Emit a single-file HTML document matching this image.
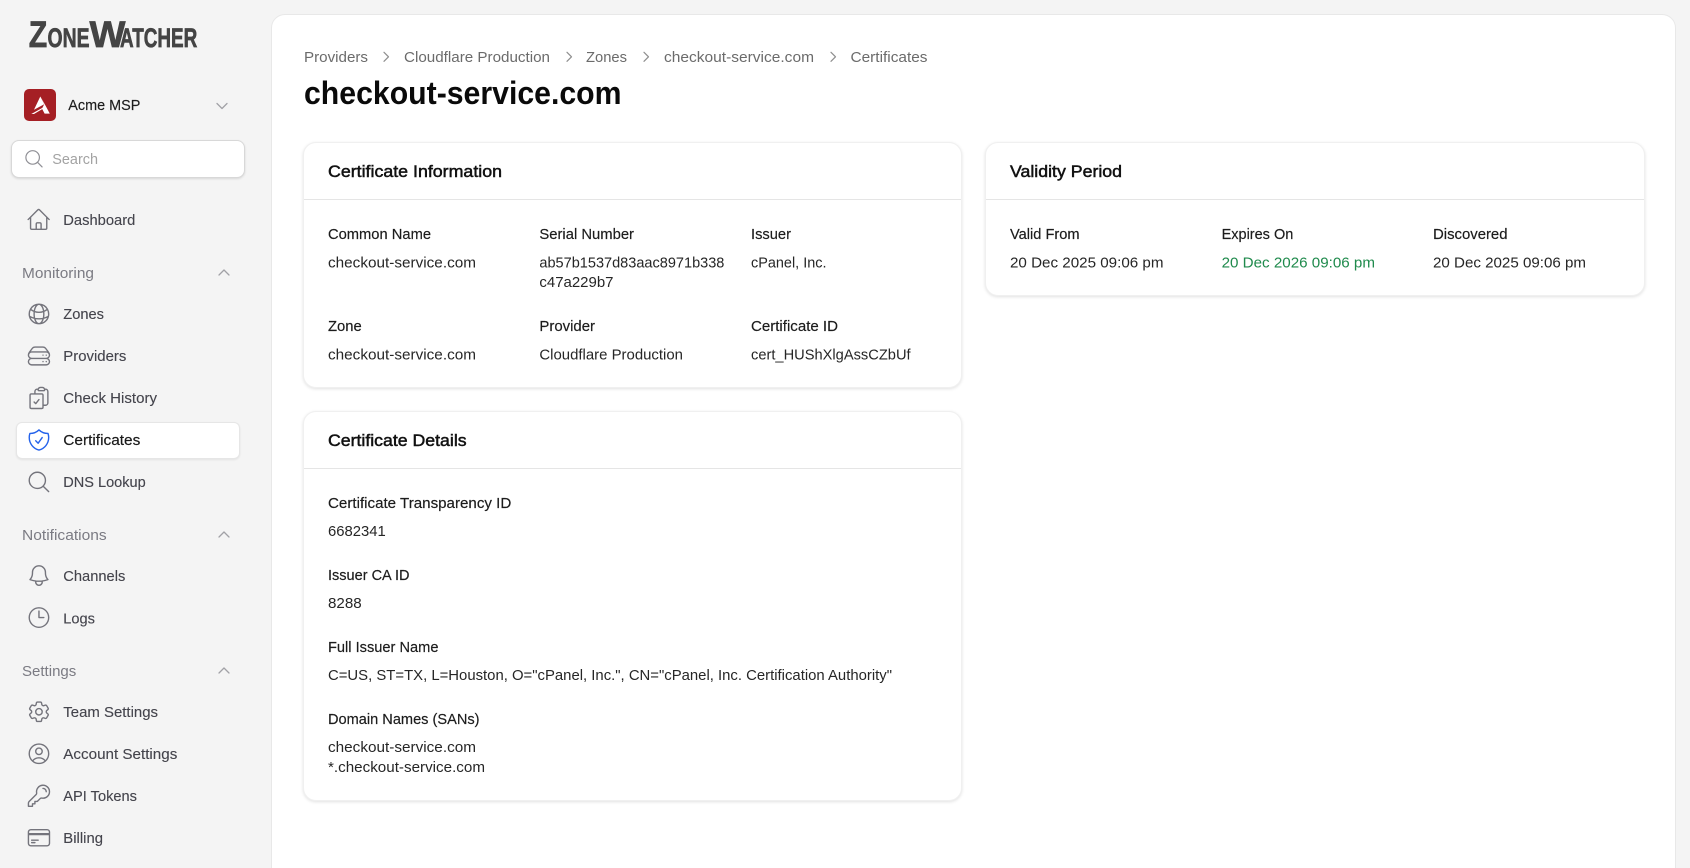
<!DOCTYPE html>
<html lang="en">
<head>
<meta charset="utf-8">
<title>checkout-service.com - Certificates</title>
<style>
html,body{margin:0;padding:0;width:1690px;height:868px;overflow:hidden;background:#f4f4f4;font-family:"Liberation Sans",sans-serif}
#app{position:relative;width:1690px;height:868px;overflow:hidden}
.box{position:absolute;box-sizing:border-box;background:#fff}
.panel{left:271px;top:14px;width:1405px;height:880px;border:1px solid #e8e8e8;border-radius:14px}
.search{left:11px;top:140px;width:234px;height:37.5px;border:1px solid #d8d8d8;border-radius:8px;box-shadow:0 1px 2px rgba(0,0,0,.12)}
.active{left:16px;top:421.5px;width:224px;height:37.5px;border:1px solid #e6e6e6;border-radius:6px;box-shadow:0 1px 2px rgba(0,0,0,.07)}
.card{border:1px solid #f0f0f0;border-radius:13px;box-shadow:0 1px 3px rgba(0,0,0,.12)}
.card i{position:absolute;left:0;right:0;height:1px;background:#e5e5e5;top:56px}
svg.o{position:absolute;left:0;top:0}
text{font-family:"Liberation Sans",sans-serif;font-size:15px}
.n{fill:#44444c;stroke:#44444c;stroke-width:.12}
.s{fill:#7b7b83}
.l{fill:#1c1c1c;stroke:#1c1c1c;stroke-width:.18}
.v{fill:#262626}
.b{fill:#6b6b6b}
.t{font-size:17px;fill:#111;stroke:#111;stroke-width:.5}
.ic{fill:none;stroke:#74747c;stroke-width:1.3;stroke-linecap:round;stroke-linejoin:round}
.lg{font-weight:700;fill:#444;stroke:#444;stroke-width:.7}
</style>
</head>
<body>
<div id="app">
<div class="box panel"></div>
<div class="box search"></div>
<div class="box active"></div>
<div class="box card" style="left:303px;top:142px;width:659px;height:246px"><i></i></div>
<div class="box card" style="left:303px;top:411px;width:659px;height:390px"><i></i></div>
<div class="box card" style="left:985px;top:142px;width:659.5px;height:154px"><i></i></div>

<svg class="o" width="1690" height="868" viewBox="0 0 1690 868" xmlns="http://www.w3.org/2000/svg">
<!-- logo -->
<text class="lg" x="28.8" y="46.8" style="font-size:37px" textLength="18.5" lengthAdjust="spacingAndGlyphs">Z</text>
<text class="lg" x="47.5" y="46.8" style="font-size:27px" textLength="42" lengthAdjust="spacingAndGlyphs">ONE</text>
<text class="lg" x="89.5" y="46.8" style="font-size:37px" textLength="36" lengthAdjust="spacingAndGlyphs">W</text>
<text class="lg" x="120" y="46.8" style="font-size:27px" textLength="77.3" lengthAdjust="spacingAndGlyphs">ATCHER</text>

<!-- org -->
<rect x="24" y="89" width="32" height="32" rx="5" fill="#a51f24"/>
<path d="M40.3 96.5 L34 109.8 L44.2 104.3 Z" fill="#fff"/>
<path d="M40.3 96.5 L45.6 105.8 L49.8 113.6 L44.6 113.6 L42 108.6 L44.2 104.3 Z" fill="#fff"/>
<path d="M31.3 114 L45 106.4 L45.4 107.2 L34 114 Z" fill="#fff"/>
<text x="68.3" y="110" textLength="72" lengthAdjust="spacingAndGlyphs" fill="#1c1c1c" stroke="#1c1c1c" stroke-width=".15">Acme MSP</text>
<path d="M217 103.5 L222 108.5 L227 103.5" fill="none" stroke="#a1a1a6" stroke-width="1.3" stroke-linecap="round" stroke-linejoin="round"/>

<!-- search -->
<g transform="translate(23.2 148) scale(.9)"><path class="ic" d="m21 21-5.197-5.197m0 0A7.5 7.5 0 1 0 5.196 5.196a7.5 7.5 0 0 0 10.607 10.607Z" style="stroke:#8f8f95"/></g>
<text x="52.3" y="164" textLength="45.7" lengthAdjust="spacingAndGlyphs" fill="#a3a3a3">Search</text>

<!-- nav -->
<g transform="translate(25.7 206.6) scale(1.08)"><path class="ic" d="m2.25 12 8.954-8.955c.44-.439 1.152-.439 1.591 0L21.75 12M4.5 9.75v10.125c0 .621.504 1.125 1.125 1.125H9.75v-4.875c0-.621.504-1.125 1.125-1.125h2.25c.621 0 1.125.504 1.125 1.125V21h4.125c.621 0 1.125-.504 1.125-1.125V9.75M8.25 21h8.25"/></g>
<text class="n" x="63.3" y="225.2" textLength="72" lengthAdjust="spacingAndGlyphs">Dashboard</text>

<text class="s" x="22" y="278" textLength="72" lengthAdjust="spacingAndGlyphs">Monitoring</text>
<path d="M219 275 L224 270 L229 275" fill="none" stroke="#a1a1a6" stroke-width="1.3" stroke-linecap="round" stroke-linejoin="round"/>

<g transform="translate(26 301) scale(1.08)"><path class="ic" d="M12 21a9.004 9.004 0 0 0 8.716-6.747M12 21a9.004 9.004 0 0 1-8.716-6.747M12 21c2.485 0 4.5-4.03 4.5-9S14.485 3 12 3m0 18c-2.485 0-4.5-4.03-4.5-9S9.515 3 12 3m0 0a8.997 8.997 0 0 1 7.843 4.582M12 3a8.997 8.997 0 0 0-7.843 4.582m15.686 0A11.953 11.953 0 0 1 12 10.5c-2.998 0-5.74-1.1-7.843-2.918m15.686 0A8.959 8.959 0 0 1 21 12c0 .778-.099 1.533-.284 2.253m0 0A17.919 17.919 0 0 1 12 16.5c-3.162 0-6.133-.815-8.716-2.247m0 0A9.015 9.015 0 0 1 3 12c0-1.605.42-3.113 1.157-4.418"/></g>
<text class="n" x="63.3" y="319" textLength="40.7" lengthAdjust="spacingAndGlyphs">Zones</text>

<g transform="translate(26 343) scale(1.08)"><path class="ic" d="M5.25 14.25h13.5m-13.5 0a3 3 0 0 1-3-3m3 3a3 3 0 1 0 0 6h13.5a3 3 0 1 0 0-6m-16.5-3a3 3 0 0 1 3-3h13.5a3 3 0 0 1 3 3m-19.5 0a4.5 4.5 0 0 1 .9-2.7L5.737 5.1a3.375 3.375 0 0 1 2.7-1.35h7.126c1.062 0 2.062.5 2.7 1.35l2.587 3.45a4.5 4.5 0 0 1 .9 2.7m0 0a3 3 0 0 1-3 3m0 3h.008v.008h-.008v-.008Zm0-6h.008v.008h-.008v-.008Zm-3 6h.008v.008h-.008v-.008Zm0-6h.008v.008h-.008v-.008Z"/></g>
<text class="n" x="63.3" y="361" textLength="63" lengthAdjust="spacingAndGlyphs">Providers</text>

<g transform="translate(26 385) scale(1.08)"><path class="ic" d="M11.35 3.836c-.065.21-.1.433-.1.664 0 .414.336.75.75.75h4.5a.75.75 0 0 0 .75-.75 2.25 2.25 0 0 0-.1-.664m-5.8 0A2.251 2.251 0 0 1 13.5 2.25H15c1.012 0 1.867.668 2.15 1.586m-5.8 0c-.376.023-.75.05-1.124.08C9.095 4.01 8.25 4.973 8.25 6.108V8.25m8.9-4.414c.376.023.75.05 1.124.08 1.131.094 1.976 1.057 1.976 2.192V16.5A2.25 2.25 0 0 1 18 18.75h-2.25m-7.5-10.5H4.875c-.621 0-1.125.504-1.125 1.125v11.25c0 .621.504 1.125 1.125 1.125h9.75c.621 0 1.125-.504 1.125-1.125V18.75m-7.5-10.5h6.375c.621 0 1.125.504 1.125 1.125v9.375m-8.25-3 1.5 1.5 3-3.75"/></g>
<text class="n" x="63.3" y="403" textLength="93.7" lengthAdjust="spacingAndGlyphs">Check History</text>

<g transform="translate(26 427) scale(1.08)"><path class="ic" style="stroke:#2563eb" d="M9 12.75 11.25 15 15 9.75m-3-7.036A11.959 11.959 0 0 1 3.598 6 11.99 11.99 0 0 0 3 9.749c0 5.592 3.824 10.29 9 11.623 5.176-1.332 9-6.03 9-11.622 0-1.31-.21-2.571-.598-3.751h-.152c-3.196 0-6.1-1.248-8.25-3.286Z"/></g>
<text x="63.3" y="445" textLength="77" lengthAdjust="spacingAndGlyphs" fill="#1a1a1a" stroke="#1a1a1a" stroke-width=".18">Certificates</text>

<g transform="translate(26 469) scale(1.08)"><path class="ic" d="m21 21-5.197-5.197m0 0A7.5 7.5 0 1 0 5.196 5.196a7.5 7.5 0 0 0 10.607 10.607Z"/></g>
<text class="n" x="63.3" y="487" textLength="82.4" lengthAdjust="spacingAndGlyphs">DNS Lookup</text>

<text class="s" x="22" y="540" textLength="84.7" lengthAdjust="spacingAndGlyphs">Notifications</text>
<path d="M219 537 L224 532 L229 537" fill="none" stroke="#a1a1a6" stroke-width="1.3" stroke-linecap="round" stroke-linejoin="round"/>

<g transform="translate(26 562.6) scale(1.08)"><path class="ic" d="M14.857 17.082a23.848 23.848 0 0 0 5.454-1.31A8.967 8.967 0 0 1 18 9.75V9A6 6 0 0 0 6 9v.75a8.967 8.967 0 0 1-2.312 6.022c1.733.64 3.56 1.085 5.455 1.31m5.714 0a24.255 24.255 0 0 1-5.714 0m5.714 0a3 3 0 1 1-5.714 0"/></g>
<text class="n" x="63.3" y="581" textLength="62" lengthAdjust="spacingAndGlyphs">Channels</text>

<g transform="translate(26 604.6) scale(1.08)"><path class="ic" d="M12 6v6h4.5m4.5 0a9 9 0 1 1-18 0 9 9 0 0 1 18 0Z"/></g>
<text class="n" x="63.3" y="623.3" textLength="31.7" lengthAdjust="spacingAndGlyphs">Logs</text>

<text class="s" x="22" y="676" textLength="54.3" lengthAdjust="spacingAndGlyphs">Settings</text>
<path d="M219 673 L224 668 L229 673" fill="none" stroke="#a1a1a6" stroke-width="1.3" stroke-linecap="round" stroke-linejoin="round"/>

<g transform="translate(26 698.8) scale(1.08)"><path class="ic" d="M9.594 3.94c.09-.542.56-.94 1.11-.94h2.593c.55 0 1.02.398 1.11.94l.213 1.281c.063.374.313.686.645.87.074.04.147.083.22.127.325.196.72.257 1.075.124l1.217-.456a1.125 1.125 0 0 1 1.37.49l1.296 2.247a1.125 1.125 0 0 1-.26 1.431l-1.003.827c-.293.241-.438.613-.43.992a7.723 7.723 0 0 1 0 .255c-.008.378.137.75.43.991l1.004.827c.424.35.534.955.26 1.43l-1.298 2.247a1.125 1.125 0 0 1-1.369.491l-1.217-.456c-.355-.133-.75-.072-1.076.124a6.47 6.47 0 0 1-.22.128c-.331.183-.581.495-.644.869l-.213 1.281c-.09.543-.56.94-1.11.94h-2.594c-.55 0-1.019-.398-1.11-.94l-.213-1.281c-.062-.374-.312-.686-.644-.87a6.52 6.52 0 0 1-.22-.127c-.325-.196-.72-.257-1.076-.124l-1.217.456a1.125 1.125 0 0 1-1.369-.49l-1.297-2.247a1.125 1.125 0 0 1 .26-1.431l1.004-.827c.292-.24.437-.613.43-.991a6.932 6.932 0 0 1 0-.255c.007-.38-.138-.751-.43-.992l-1.004-.827a1.125 1.125 0 0 1-.26-1.43l1.297-2.247a1.125 1.125 0 0 1 1.37-.491l1.216.456c.356.133.751.072 1.076-.124.072-.044.146-.086.22-.128.332-.183.582-.495.644-.869l.214-1.28Z"/><path class="ic" d="M15 12a3 3 0 1 1-6 0 3 3 0 0 1 6 0Z"/></g>
<text class="n" x="63.3" y="717.2" textLength="94.7" lengthAdjust="spacingAndGlyphs">Team Settings</text>

<g transform="translate(26 740.8) scale(1.08)"><path class="ic" d="M17.982 18.725A7.488 7.488 0 0 0 12 15.75a7.488 7.488 0 0 0-5.982 2.975m11.963 0a9 9 0 1 0-11.963 0m11.963 0A8.966 8.966 0 0 1 12 21a8.966 8.966 0 0 1-5.982-2.275M15 9.75a3 3 0 1 1-6 0 3 3 0 0 1 6 0Z"/></g>
<text class="n" x="63.3" y="759.2" textLength="114" lengthAdjust="spacingAndGlyphs">Account Settings</text>

<g transform="translate(26 782.8) scale(1.08)"><path class="ic" d="M15.75 5.25a3 3 0 0 1 3 3m3 0a6 6 0 0 1-7.029 5.912c-.563-.097-1.159.026-1.563.43L10.5 17.25H8.25v2.25H6v2.25H2.25v-2.818c0-.597.237-1.17.659-1.591l6.499-6.499c.404-.404.527-1 .43-1.563A6 6 0 1 1 21.75 8.25Z"/></g>
<text class="n" x="63.3" y="801.2" textLength="73.7" lengthAdjust="spacingAndGlyphs">API Tokens</text>

<g transform="translate(26 824.8) scale(1.08)"><path class="ic" d="M2.25 8.25h19.5M2.25 9h19.5m-16.5 5.25h6m-6 2.25h3m-3.75 3h15a2.25 2.25 0 0 0 2.25-2.25V6.75A2.25 2.25 0 0 0 19.5 4.5h-15a2.25 2.25 0 0 0-2.25 2.25v10.5A2.25 2.25 0 0 0 4.5 19.5Z"/></g>
<text class="n" x="63.3" y="843.2" textLength="39.7" lengthAdjust="spacingAndGlyphs">Billing</text>

<!-- breadcrumb -->
<text class="b" x="304" y="62" textLength="64" lengthAdjust="spacingAndGlyphs">Providers</text>
<text class="b" x="404" y="62" textLength="146" lengthAdjust="spacingAndGlyphs">Cloudflare Production</text>
<text class="b" x="586" y="62" textLength="41" lengthAdjust="spacingAndGlyphs">Zones</text>
<text class="b" x="664" y="62" textLength="150" lengthAdjust="spacingAndGlyphs">checkout-service.com</text>
<text class="b" x="850.5" y="62" textLength="77" lengthAdjust="spacingAndGlyphs">Certificates</text>
<g fill="none" stroke="#8f8f8f" stroke-width="1.2" stroke-linecap="round" stroke-linejoin="round">
<path d="M384 52.3 L388.5 56.8 L384 61.3"/>
<path d="M567 52.3 L571.5 56.8 L567 61.3"/>
<path d="M644 52.3 L648.5 56.8 L644 61.3"/>
<path d="M831 52.3 L835.5 56.8 L831 61.3"/>
</g>

<!-- title -->
<text x="304" y="104" textLength="317.5" lengthAdjust="spacingAndGlyphs" fill="#0a0a0a" style="font-size:32px;font-weight:700">checkout-service.com</text>

<!-- cert info -->
<text class="t" x="328" y="177" textLength="174" lengthAdjust="spacingAndGlyphs">Certificate Information</text>
<text class="l" x="328" y="239" textLength="103" lengthAdjust="spacingAndGlyphs">Common Name</text>
<text class="v" x="328" y="267.3" textLength="148" lengthAdjust="spacingAndGlyphs">checkout-service.com</text>
<text class="l" x="539.4" y="239" textLength="94.6" lengthAdjust="spacingAndGlyphs">Serial Number</text>
<text class="v" x="539.4" y="267.3" textLength="185" lengthAdjust="spacingAndGlyphs">ab57b1537d83aac8971b338</text>
<text class="v" x="539.4" y="287" textLength="74.1" lengthAdjust="spacingAndGlyphs">c47a229b7</text>
<text class="l" x="751" y="239" textLength="40" lengthAdjust="spacingAndGlyphs">Issuer</text>
<text class="v" x="751" y="267.3" textLength="75.5" lengthAdjust="spacingAndGlyphs">cPanel, Inc.</text>
<text class="l" x="328" y="330.8" textLength="33.7" lengthAdjust="spacingAndGlyphs">Zone</text>
<text class="v" x="328" y="359.3" textLength="148" lengthAdjust="spacingAndGlyphs">checkout-service.com</text>
<text class="l" x="539.4" y="330.8" textLength="55.6" lengthAdjust="spacingAndGlyphs">Provider</text>
<text class="v" x="539.4" y="359.3" textLength="143.6" lengthAdjust="spacingAndGlyphs">Cloudflare Production</text>
<text class="l" x="751" y="330.8" textLength="87" lengthAdjust="spacingAndGlyphs">Certificate ID</text>
<text class="v" x="751" y="359.3" textLength="159.6" lengthAdjust="spacingAndGlyphs">cert_HUShXlgAssCZbUf</text>

<!-- cert details -->
<text class="t" x="328" y="446" textLength="138.6" lengthAdjust="spacingAndGlyphs">Certificate Details</text>
<text class="l" x="328" y="508" textLength="183.3" lengthAdjust="spacingAndGlyphs">Certificate Transparency ID</text>
<text class="v" x="328" y="536" textLength="57.8" lengthAdjust="spacingAndGlyphs">6682341</text>
<text class="l" x="328" y="580" textLength="81.5" lengthAdjust="spacingAndGlyphs">Issuer CA ID</text>
<text class="v" x="328" y="608" textLength="33.7" lengthAdjust="spacingAndGlyphs">8288</text>
<text class="l" x="328" y="652" textLength="110.5" lengthAdjust="spacingAndGlyphs">Full Issuer Name</text>
<text class="v" x="328" y="680" textLength="564" lengthAdjust="spacingAndGlyphs">C=US, ST=TX, L=Houston, O="cPanel, Inc.", CN="cPanel, Inc. Certification Authority"</text>
<text class="l" x="328" y="724" textLength="151.5" lengthAdjust="spacingAndGlyphs">Domain Names (SANs)</text>
<text class="v" x="328" y="752" textLength="148" lengthAdjust="spacingAndGlyphs">checkout-service.com</text>
<text class="v" x="328" y="772" textLength="157" lengthAdjust="spacingAndGlyphs">*.checkout-service.com</text>

<!-- validity -->
<text class="t" x="1010" y="177" textLength="112" lengthAdjust="spacingAndGlyphs">Validity Period</text>
<text class="l" x="1010" y="239" textLength="69.6" lengthAdjust="spacingAndGlyphs">Valid From</text>
<text class="v" x="1010" y="267.3" textLength="153.5" lengthAdjust="spacingAndGlyphs">20 Dec 2025 09:06 pm</text>
<text class="l" x="1221.6" y="239" textLength="71.7" lengthAdjust="spacingAndGlyphs">Expires On</text>
<text x="1221.6" y="267.3" textLength="153.4" lengthAdjust="spacingAndGlyphs" fill="#1f8a4c">20 Dec 2026 09:06 pm</text>
<text class="l" x="1433" y="239" textLength="74.5" lengthAdjust="spacingAndGlyphs">Discovered</text>
<text class="v" x="1433" y="267.3" textLength="153" lengthAdjust="spacingAndGlyphs">20 Dec 2025 09:06 pm</text>
</svg>
</div>
</body>
</html>
